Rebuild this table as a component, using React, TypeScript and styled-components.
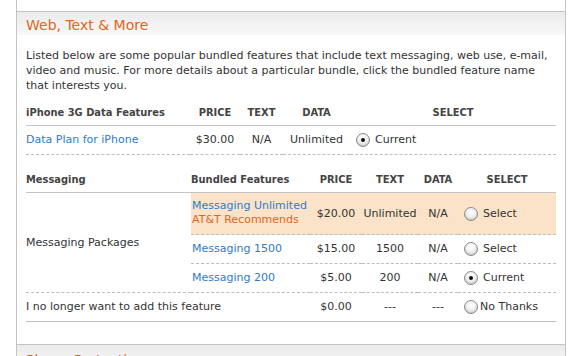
import React from "react";
import styled, { createGlobalStyle } from "styled-components";

const GlobalStyle = createGlobalStyle`
  html, body {
    margin: 0;
    padding: 0;
    background: #fff;
  }
  body {
    font-family: "DejaVu Sans", Verdana, sans-serif;
    font-size: 11px;
    color: #333;
  }
`;

const Page = styled.div`
  width: 571px;
  height: 356px;
  overflow: hidden;
  padding-left: 16px;
  box-sizing: border-box;
`;

const Panel = styled.div`
  width: 550px;
  border-left: 1px solid #c4c4c4;
  border-right: 1px solid #c4c4c4;
  box-sizing: border-box;
`;

const Spacer = styled.div`
  height: 11px;
`;

const Section = styled.section<{ $shaded?: boolean }>`
  border-top: 1px solid #c4c4c4;
  background: ${(p) => (p.$shaded ? "#ececec" : "#fff")};
`;

const SectionHeader = styled.h2<{ $lead?: number }>`
  margin: 0;
  height: 23px;
  padding-left: 9px;
  background: linear-gradient(to bottom, #ebebeb, #f8f8f8);
  font-family: "DejaVu Sans", Verdana, sans-serif;
  font-weight: normal;
  font-size: 14px;
  line-height: ${(p) => p.$lead ?? 27}px;
  color: #e0661c;
  white-space: nowrap;
`;

const Body = styled.div`
  padding: 13px 9px 22px;
`;

const Intro = styled.p`
  margin: 0;
  line-height: 15px;
`;

const Table = styled.table<{ $gap: number }>`
  width: 530px;
  margin-top: ${(p) => p.$gap}px;
  table-layout: fixed;
  border-collapse: separate;
  border-spacing: 0;
`;

const Th = styled.th<{ $align?: "left" | "center" }>`
  padding: 5px 0;
  line-height: 14px;
  font-family: "DejaVu Sans Condensed", "DejaVu Sans", sans-serif;
  font-weight: bold;
  font-size: 11px;
  color: #444;
  text-align: ${(p) => p.$align ?? "center"};
  border-bottom: 1px solid #c4c4c4;
  white-space: nowrap;
`;

const Td = styled.td<{
  $align?: "left" | "center";
  $line?: "dashed" | "solid";
  $hl?: boolean;
  $pad?: string;
}>`
  padding: ${(p) => p.$pad ?? "7px 0"};
  line-height: 14px;
  text-align: ${(p) => p.$align ?? "center"};
  vertical-align: middle;
  white-space: nowrap;
  background: ${(p) => (p.$hl ? "#fbe3c9" : "transparent")};
  border-bottom: 1px ${(p) => p.$line ?? "dashed"} #bdbdbd;
`;

const Link = styled.a`
  color: #2d7ccb;
  text-decoration: none;
  display: block;
`;

const Recommend = styled.span`
  display: block;
  color: #e0661c;
`;

const Choice = styled.label<{ $tight?: boolean }>`
  display: flex;
  align-items: center;
  height: 14px;
  gap: ${(p) => (p.$tight ? 2 : 5)}px;
  padding-left: 6px;
`;

const Dot = styled.span<{ $on?: boolean }>`
  width: 12px;
  height: 12px;
  border-radius: 50%;
  border: 1px solid #8a8a8a;
  background: radial-gradient(circle at 50% 35%, #ffffff 0%, #f0f0f0 45%, #c9c9c9 100%);
  box-shadow: inset 0 -1px 1px rgba(0, 0, 0, 0.1);
  position: relative;
  flex: none;

  &::after {
    content: "";
    display: ${(p) => (p.$on ? "block" : "none")};
    position: absolute;
    left: 4px;
    top: 4px;
    width: 4px;
    height: 4px;
    border-radius: 50%;
    background: #111;
  }
`;

const Radio = ({ on, label, tight }: { on?: boolean; label: string; tight?: boolean }) => (
  <Choice $tight={tight}>
    <Dot $on={on} />
    {label}
  </Choice>
);

const packages = [
  { name: "Messaging Unlimited", rec: true, price: "$20.00", text: "Unlimited", data: "N/A", current: false },
  { name: "Messaging 1500", rec: false, price: "$15.00", text: "1500", data: "N/A", current: false },
  { name: "Messaging 200", rec: false, price: "$5.00", text: "200", data: "N/A", current: true },
];

const App = () => {
  return (
    <Page>
      <GlobalStyle />
      <Panel>
        <Spacer />
        <Section>
          <SectionHeader>Web, Text &amp; More</SectionHeader>
          <Body>
            <Intro>
              Listed below are some popular bundled features that include text messaging, web use, e-mail,
              video and music. For more details about a particular bundle, click the bundled feature name
              that interests you.
            </Intro>

            <Table $gap={8}>
              <colgroup>
                <col style={{ width: 164 }} />
                <col style={{ width: 50 }} />
                <col style={{ width: 43 }} />
                <col style={{ width: 67 }} />
                <col style={{ width: 206 }} />
              </colgroup>
              <thead>
                <tr>
                  <Th $align="left">iPhone 3G Data Features</Th>
                  <Th>PRICE</Th>
                  <Th>TEXT</Th>
                  <Th>DATA</Th>
                  <Th>SELECT</Th>
                </tr>
              </thead>
              <tbody>
                <tr>
                  <Td $align="left">
                    <Link href="#">Data Plan for iPhone</Link>
                  </Td>
                  <Td>$30.00</Td>
                  <Td>N/A</Td>
                  <Td>Unlimited</Td>
                  <Td $align="left">
                    <Radio on label="Current" />
                  </Td>
                </tr>
              </tbody>
            </Table>

            <Table $gap={13}>
              <colgroup>
                <col style={{ width: 165 }} />
                <col style={{ width: 119 }} />
                <col style={{ width: 52 }} />
                <col style={{ width: 56 }} />
                <col style={{ width: 40 }} />
                <col style={{ width: 98 }} />
              </colgroup>
              <thead>
                <tr>
                  <Th $align="left">Messaging</Th>
                  <Th $align="left">Bundled Features</Th>
                  <Th>PRICE</Th>
                  <Th>TEXT</Th>
                  <Th>DATA</Th>
                  <Th>SELECT</Th>
                </tr>
              </thead>
              <tbody>
                {packages.map((p, i) => (
                  <tr key={p.name}>
                    {i === 0 && (
                      <Td $align="left" rowSpan={3}>
                        Messaging Packages
                      </Td>
                    )}
                    <Td $align="left" $hl={p.rec} $pad={p.rec ? "6px 0 7px 1px" : "7px 0 7px 1px"}>
                      <Link href="#">{p.name}</Link>
                      {p.rec && <Recommend>AT&amp;T Recommends</Recommend>}
                    </Td>
                    <Td $hl={p.rec}>{p.price}</Td>
                    <Td $hl={p.rec}>{p.text}</Td>
                    <Td $hl={p.rec}>{p.data}</Td>
                    <Td $align="left" $hl={p.rec}>
                      <Radio on={p.current} label={p.current ? "Current" : "Select"} />
                    </Td>
                  </tr>
                ))}
                <tr>
                  <Td $align="left" $line="solid">
                    I no longer want to add this feature
                  </Td>
                  <Td $line="solid" />
                  <Td $line="solid">$0.00</Td>
                  <Td $line="solid">---</Td>
                  <Td $line="solid">---</Td>
                  <Td $align="left" $line="solid">
                    <Radio tight label="No Thanks" />
                  </Td>
                </tr>
              </tbody>
            </Table>
          </Body>
        </Section>
        <Section $shaded>
          <SectionHeader $lead={31}>Phone Protection</SectionHeader>
        </Section>
      </Panel>
    </Page>
  );
};

export default App;
